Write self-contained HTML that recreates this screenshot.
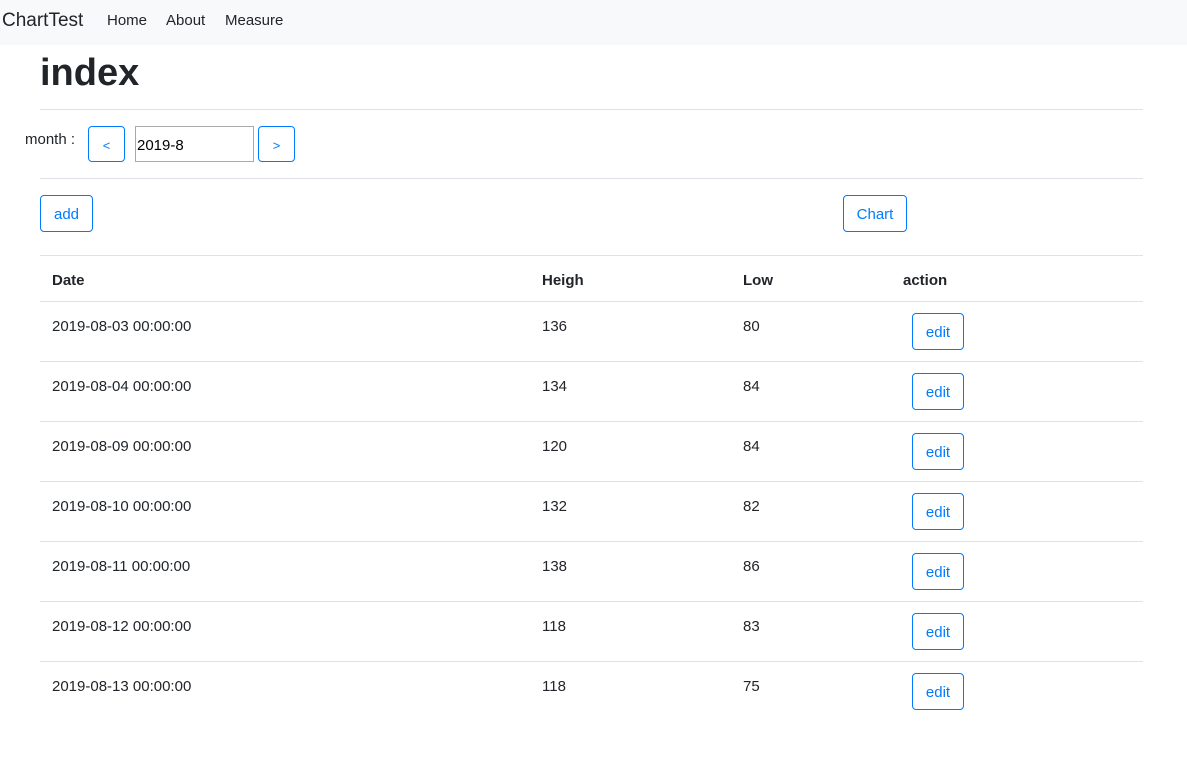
<!DOCTYPE html>
<html><head><style>
*{box-sizing:border-box;margin:0;padding:0}
body{width:1187px;height:763px;background:#fff;font-family:"Liberation Sans",sans-serif;color:#212529;font-size:15px;position:relative;overflow:hidden}
.a{position:absolute;white-space:nowrap}
.nav{position:absolute;left:0;top:0;width:1187px;height:45px;background:#f8f9fa}
.btn{position:absolute;border:1px solid #007bff;border-radius:4px;color:#007bff;display:flex;align-items:center;justify-content:center;font-size:15px;background:#fff;padding-top:2px}
.hr{position:absolute;left:40px;width:1103px;height:1px;background:#dee2e6}
b{font-weight:bold}
</style></head><body>
<div class="nav"></div>
<div class="a" style="left:2px;top:10px;font-size:19px">ChartTest</div>
<div class="a" style="left:107px;top:12px">Home</div>
<div class="a" style="left:166px;top:12px">About</div>
<div class="a" style="left:225px;top:12px">Measure</div>
<div class="a" style="left:40px;top:52px;font-size:38px;font-weight:bold">index</div>
<div class="hr" style="top:109px"></div>
<div class="a" style="left:25px;top:131px">month :</div>
<div class="btn" style="left:88px;top:126px;width:37px;height:36px;font-size:13px">&lt;</div>
<div class="a" style="left:135px;top:126px;width:119px;height:36px;border:1px solid #a9a9a9;padding:10px 1px;font-size:15px;color:#000">2019-8</div>
<div class="btn" style="left:258px;top:126px;width:37px;height:36px;font-size:13px">&gt;</div>
<div class="hr" style="top:178px"></div>
<div class="btn" style="left:40px;top:195px;width:53px;height:37px">add</div>
<div class="btn" style="left:843px;top:195px;width:64px;height:37px">Chart</div>
<div class="hr" style="top:255px"></div>
<div class="a" style="left:52px;top:272px"><b>Date</b></div>
<div class="a" style="left:542px;top:272px"><b>Heigh</b></div>
<div class="a" style="left:743px;top:272px"><b>Low</b></div>
<div class="a" style="left:903px;top:272px"><b>action</b></div>
<div class="hr" style="top:301px"></div>
<div id="rows"></div>
<script>
var d=[["03",136,80],["04",134,84],["09",120,84],["10",132,82],["11",138,86],["12",118,83],["13",118,75]],h="";
d.forEach(function(r,i){var t=301+i*60;
h+='<div class="a" style="left:52px;top:'+(t+17)+'px">2019-08-'+r[0]+' 00:00:00</div>'+
'<div class="a" style="left:542px;top:'+(t+17)+'px">'+r[1]+'</div>'+
'<div class="a" style="left:743px;top:'+(t+17)+'px">'+r[2]+'</div>'+
'<div class="btn" style="left:912px;top:'+(t+12)+'px;width:52px;height:37px">edit</div>'+
(i<6?'<div class="hr" style="top:'+(t+60)+'px"></div>':'');});
document.getElementById("rows").innerHTML=h;
</script>
</body></html>
